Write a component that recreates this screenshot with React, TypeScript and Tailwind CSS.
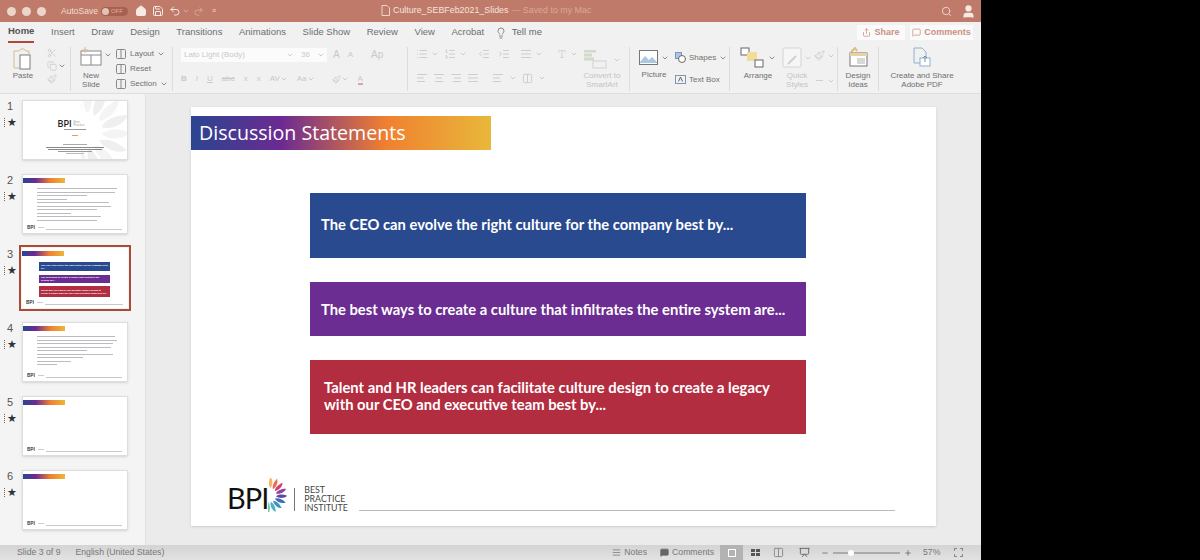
import type { ReactNode } from 'react'
import {
  AlignCenter, AlignJustify, AlignLeft, AlignRight, ChevronDown, Columns2, Copy, House, IndentDecrease, IndentIncrease,
  Lightbulb, List, ListOrdered, MessageSquare, Minus, Paintbrush, Plus, Presentation, Redo2, Save, Scissors, Search,
  Share, Type, Undo2, User,
} from 'lucide-react'

const tabs = ['Home', 'Insert', 'Draw', 'Design', 'Transitions', 'Animations', 'Slide Show', 'Review', 'View', 'Acrobat']

const petals = ['#f6e08e', '#f3b76c', '#e86f55', '#cf3f73', '#93429f', '#5a4aa8', '#3d6db5', '#3f94bf', '#4fb3b8', '#7cc9b2']
const greys = ['#efefef', '#f4f4f4', '#efefef', '#f4f4f4', '#efefef', '#f4f4f4', '#efefef', '#f4f4f4', '#efefef', '#f4f4f4']

function Chev({ faded }: { faded?: boolean }) {
  return <ChevronDown size={8} strokeWidth={2.5} className={faded ? 'text-[#c4c4c4]' : 'text-[#777]'} />
}

// blades of the BPI logo, turned around a point left of the drawing
function Fan({ w, h, colors }: { w: number; h: number; colors: string[] }) {
  return (
    <svg width={w} height={h} viewBox="0 0 20 34">
      {colors.map((c, i) => (
        <path
          key={i}
          d="M8 17 C10 14.5 14 13.5 19 14.5 C17 17.5 12 19 8 17 Z"
          fill={c}
          transform={`rotate(${-100 + i * 22} 1 17)`}
        />
      ))}
    </svg>
  )
}

function MiniLogo() {
  return (
    <div className="flex items-end">
      <span className="font-['Lato',sans-serif] text-[5px] leading-[5px] font-bold text-[#333]">BPI</span>
      <span className="ml-[3px] h-[1px] w-[6px] self-center bg-[#ccc]" />
    </div>
  )
}

function TextBars({ rows }: { rows: number[] }) {
  return (
    <div className="flex flex-col gap-[2.5px] pl-[14px] pt-[5px]">
      {rows.map((w, i) => (
        <div key={i} className="h-[1px] bg-[#bcbcc0]" style={{ width: w }} />
      ))}
    </div>
  )
}

function Thumb({ n, title, active, children }: { n: number; title?: boolean; active?: boolean; children?: ReactNode }) {
  return (
    <div className="flex h-[60px] items-start">
      <div className="flex w-[22px] flex-col items-center pr-[2px] text-[#555]">
        <span className="text-[11px] leading-[12px]">{n}</span>
        <div className="mt-[5px] flex items-center gap-[1px]">
          <span className="h-[9px] w-[2px] border-l border-dotted border-[#666]" />
          <span className="text-[11px] leading-[10px] text-[#333]">★</span>
        </div>
      </div>
      <div
        className={`relative flex h-[60px] w-[106px] flex-col bg-white ${
          active ? 'outline-2 outline-offset-1 outline-[#ad4a35]' : 'border border-[#ddd] shadow-sm'
        }`}
      >
        {title && (
          <div className="mt-[3px] h-[5px] w-[42px] bg-[linear-gradient(90deg,#2b4590_0%,#6b2a92_30%,#f08030_65%,#e8b83a_100%)]" />
        )}
        {children}
        {title && (
          <div className="absolute right-[5px] bottom-[3px] left-[4px] flex items-end gap-[2px]">
            <MiniLogo />
            <div className="h-[1px] flex-1 bg-[#c9c9c9]" />
          </div>
        )}
      </div>
    </div>
  )
}

function RibbonGroup({ w, children, divider = true }: { w: number; children: ReactNode; divider?: boolean }) {
  return (
    <div
      className={`relative flex h-[44px] shrink-0 items-start ${divider ? 'border-r border-[#dcdcdc]' : ''}`}
      style={{ width: w }}
    >
      {children}
    </div>
  )
}

function SideItem({ icon, label, chev }: { icon: ReactNode; label: string; chev?: boolean }) {
  return (
    <div className="flex h-[15px] items-center gap-[3px] text-[8px] text-[#707070]">
      {icon}
      <span>{label}</span>
      {chev && <Chev />}
    </div>
  )
}

function BigLabel({ children, faded }: { children: ReactNode; faded?: boolean }) {
  return (
    <div className={`text-center text-[8px] leading-[8.5px] ${faded ? 'text-[#c4c4c4]' : 'text-[#707070]'}`}>{children}</div>
  )
}

function Ribbon() {
  const faded = 'text-[#cdcdcd]'
  return (
    <div className="flex h-[50px] items-start bg-[#f1f1f1] pt-[4px] pl-[8px] font-['Liberation_Sans',sans-serif]">
      <RibbonGroup w={63}>
        <div className="flex w-[30px] flex-col items-center">
          <svg width="22" height="25" viewBox="0 0 22 25" fill="none">
            <path d="M2 4h5l2-2h3l2 2h3v3" stroke="#d8b98f" />
            <path d="M2 4v17h5" stroke="#d8b98f" />
            <rect x="8" y="8" width="10" height="14" fill="#fff" stroke="#7d7d7d" />
          </svg>
          <BigLabel>Paste</BigLabel>
        </div>
        <div className={`ml-[9px] flex flex-col gap-[3px] pt-[1px] ${faded}`}>
          <Scissors size={10} />
          <div className="flex items-center gap-[1px]">
            <Copy size={10} />
            <Chev />
          </div>
          <Paintbrush size={10} />
        </div>
      </RibbonGroup>
      <RibbonGroup w={102}>
        <div className="ml-[8px] flex w-[24px] flex-col items-center">
          <svg width="23" height="19" viewBox="0 0 23 19" fill="none">
            <rect x="1" y="4" width="20" height="14" fill="#fff" stroke="#8a8a8a" />
            <path d="M1 8h20M11 8v10" stroke="#8a8a8a" />
            <path d="M5 0v6M2 3h6" stroke="#d8b98f" />
          </svg>
          <div className="mt-[6px]">
            <BigLabel>
              New
              <br />
              Slide
            </BigLabel>
          </div>
        </div>
        <div className="mt-[4px] ml-[1px]">
          <Chev />
        </div>
        <div className="-mt-[1px] ml-[3px] flex flex-col">
          <SideItem icon={<Columns2 size={12} className="text-[#888]" />} label="Layout" chev />
          <SideItem icon={<Columns2 size={12} className="text-[#888]" />} label="Reset" />
          <SideItem icon={<Columns2 size={12} className="text-[#888]" />} label="Section" chev />
        </div>
      </RibbonGroup>
      <RibbonGroup w={235}>
        <div className="flex flex-col gap-[11px] pl-[8px] text-[#c9c9c9]">
          <div className="flex items-center">
            <div className="flex h-[14px] w-[116px] items-center justify-between bg-[#fbfbfb] px-[3px] text-[8px]">
              <span>Lato Light (Body)</span>
              <Chev faded />
            </div>
            <div className="flex h-[14px] w-[30px] items-center justify-between bg-[#fbfbfb] pr-[2px] pl-[4px] text-[8px]">
              <span>36</span>
              <Chev faded />
            </div>
            <span className="ml-[6px] text-[10px]">A</span>
            <span className="ml-[8px] text-[8px]">A</span>
            <span className="ml-[18px] text-[10px]">Ap</span>
          </div>
          <div className="flex items-center gap-[9px] text-[8px]">
            <span className="font-bold">B</span>
            <span className="italic">I</span>
            <span className="underline">U</span>
            <span className="line-through">abc</span>
            <span>x</span>
            <span>x</span>
            <span className="flex items-center">
              AV
              <Chev faded />
            </span>
            <span className="flex items-center">
              Aa
              <Chev faded />
            </span>
            <span className="ml-[8px] flex items-center">
              <Paintbrush size={9} />
              <Chev faded />
            </span>
            <span className="flex items-center border-b-2 border-[#dca5a5] leading-[9px]">A</span>
          </div>
        </div>
      </RibbonGroup>
      <RibbonGroup w={222}>
        <div className={`flex flex-col gap-[12px] pt-[1px] pl-[8px] ${faded}`}>
          <div className="flex items-center gap-[3px]">
            <List size={12} />
            <Chev faded />
            <ListOrdered size={12} className="ml-[2px]" />
            <Chev faded />
            <IndentDecrease size={12} className="ml-[8px]" />
            <IndentIncrease size={12} className="ml-[5px]" />
            <AlignJustify size={12} className="ml-[7px]" />
            <Chev faded />
            <Type size={10} className="ml-[11px]" />
            <Chev faded />
          </div>
          <div className="flex items-center gap-[5px]">
            <AlignLeft size={12} />
            <AlignCenter size={12} />
            <AlignRight size={12} />
            <AlignJustify size={12} />
            <AlignLeft size={12} className="ml-[8px]" />
            <Chev faded />
            <Columns2 size={11} />
            <Chev faded />
          </div>
        </div>
        <div className="absolute top-[3px] left-[169px] flex w-[50px] flex-col items-center">
          <div className="flex items-center gap-[2px]">
            <svg width="28" height="19" viewBox="0 0 28 19" fill="none">
              <path d="M1 1h12M1 5h8M1 9h10" stroke="#cfdccb" strokeWidth="3" />
              <rect x="10" y="11" width="13" height="7" stroke="#d0d0d0" />
            </svg>
            <Chev faded />
          </div>
          <div className="mt-[3px]">
            <BigLabel faded>
              Convert to
              <br />
              SmartArt
            </BigLabel>
          </div>
        </div>
      </RibbonGroup>
      <RibbonGroup w={100}>
        <div className="ml-[9px] flex flex-col items-center">
          <div className="flex items-center gap-[3px] pt-[3px]">
            <svg width="19" height="15" viewBox="0 0 19 15" fill="none">
              <rect x="0.5" y="0.5" width="18" height="14" fill="#fff" stroke="#777" />
              <path d="M1 12l5-6 4 4 3-3 5 5v1H1z" fill="#a9c8e4" />
            </svg>
            <Chev />
          </div>
          <div className="mt-[6px]">
            <BigLabel>Picture</BigLabel>
          </div>
        </div>
        <div className="ml-[6px] flex flex-col gap-[7px] pt-[3px]">
          <SideItem
            icon={
              <svg width="11" height="11" viewBox="0 0 11 11" fill="none">
                <rect x="0.5" y="0.5" width="6" height="6" fill="#a9c8e4" stroke="#7a98b5" />
                <circle cx="7" cy="7" r="3.5" fill="#fff" stroke="#666" />
              </svg>
            }
            label="Shapes"
            chev
          />
          <SideItem
            icon={
              <svg width="11" height="11" viewBox="0 0 11 11" fill="none">
                <rect x="0.5" y="1.5" width="10" height="8" stroke="#7a98b5" />
                <path d="M3.5 7.5L5.5 3l2 4.5" stroke="#666" />
              </svg>
            }
            label="Text Box"
          />
        </div>
      </RibbonGroup>
      <RibbonGroup w={108}>
        <div className="ml-[10px] flex flex-col items-center">
          <div className="flex items-end gap-[2px]">
            <svg width="26" height="21" viewBox="0 0 26 21" fill="none">
              <rect x="1" y="1" width="8" height="7" fill="#fff" stroke="#666" />
              <rect x="7" y="5" width="10" height="9" fill="#f1dc9a" />
              <rect x="15" y="13" width="8" height="7" fill="#fff" stroke="#666" />
            </svg>
            <div className="pb-[6px]">
              <Chev />
            </div>
          </div>
          <div className="mt-[4px]">
            <BigLabel>Arrange</BigLabel>
          </div>
        </div>
        <div className="ml-[6px] flex flex-col items-center">
          <div className="flex items-center gap-[2px]">
            <svg width="20" height="21" viewBox="0 0 20 21" fill="none">
              <rect x="1" y="1" width="18" height="19" rx="1" fill="#f6f6f6" stroke="#d4d4d4" />
              <path d="M6 17l8-8" stroke="#cfcfcf" strokeWidth="2" />
            </svg>
            <Chev faded />
          </div>
          <div className="mt-[4px]">
            <BigLabel faded>
              Quick
              <br />
              Styles
            </BigLabel>
          </div>
        </div>
        <div className={`ml-[2px] flex flex-col gap-[14px] pt-[3px] ${faded}`}>
          <div className="flex items-center gap-[2px]">
            <Paintbrush size={11} />
            <Chev faded />
          </div>
          <div className="flex items-center gap-[2px]">
            <Minus size={11} />
            <Chev faded />
          </div>
        </div>
      </RibbonGroup>
      <RibbonGroup w={41}>
        <div className="flex w-full flex-col items-center">
          <svg width="21" height="20" viewBox="0 0 21 20" fill="none">
            <path d="M3 5l4-4 2 3" stroke="#d9bf86" strokeWidth="2" />
            <rect x="2" y="6" width="17" height="13" fill="#fff" stroke="#777" />
            <rect x="2" y="6" width="17" height="3" fill="#e7d39b" />
            <rect x="9" y="11" width="8" height="6" fill="#d8d8d8" />
          </svg>
          <div className="mt-[5px]">
            <BigLabel>
              Design
              <br />
              Ideas
            </BigLabel>
          </div>
        </div>
      </RibbonGroup>
      <RibbonGroup w={80} divider={false}>
        <div className="flex w-full flex-col items-center pl-[6px]">
          <svg width="18" height="20" viewBox="0 0 18 20" fill="none">
            <path d="M1 1h8l4 4v5M1 1v15h6" stroke="#8fb0d0" />
            <rect x="7" y="11" width="10" height="8" fill="#fff" stroke="#8fb0d0" />
            <path d="M12 9v6M10 11l2-2 2 2" stroke="#7b93aa" />
          </svg>
          <div className="mt-[5px] whitespace-nowrap">
            <BigLabel>
              Create and Share
              <br />
              Adobe PDF
            </BigLabel>
          </div>
        </div>
      </RibbonGroup>
    </div>
  )
}

function SlideOne() {
  return (
    <div className="relative flex h-full flex-col items-center overflow-hidden pt-[18px]">
      <div className="absolute -top-[14px] -right-[6px]">
        <Fan w={52} h={88} colors={greys} />
      </div>
      <div className="relative flex items-center gap-[2px] pr-[8px]">
        <span className="font-['Lato',sans-serif] text-[9px] leading-[9px] font-semibold text-[#222]">BPI</span>
        <span className="text-[3px] leading-[3px] text-[#999]">
          Best
          <br />
          Practice
        </span>
      </div>
      <div className="relative mt-[1px] h-[1px] w-[22px] bg-[#999]" />
      <div className="relative mt-[5px] h-[1px] w-[6px] bg-[#d9a64a]" />
      <div className="relative mt-[8px] h-[1px] w-[24px] bg-[#aaa]" />
      <div className="relative mt-[2px] h-[1px] w-[58px] bg-[#888]" />
      <div className="relative mt-[1px] h-[1px] w-[54px] bg-[#888]" />
      <div className="relative mt-[1px] h-[1px] w-[34px] bg-[#999]" />
      <div className="relative mt-[1px] h-[1px] w-[18px] bg-[#bbb]" />
    </div>
  )
}

function SlideThree() {
  const cls = 'ml-[17px] flex w-[71px] items-center px-[2px] text-[2.4px] leading-[3px] font-bold text-white'
  return (
    <div className="flex flex-col">
      <div className={`mt-[6px] h-[9px] bg-[#2a4a8f] ${cls}`}>The CEO can evolve the right culture for the company best by...</div>
      <div className={`mt-[4px] h-[8px] bg-[#6b2d91] ${cls}`}>The best ways to create a culture that infiltrates the system are...</div>
      <div className={`mt-[3px] h-[11px] bg-[#b32d40] ${cls}`}>Talent and HR leaders can facilitate culture design to create a legacy with our CEO and executive team best by...</div>
    </div>
  )
}

export default function App() {
  return (
    <div className="flex h-[560px] w-[1200px] overflow-hidden bg-black font-['Liberation_Sans',sans-serif]">
      <div className="flex h-full w-[981px] shrink-0 flex-col bg-[#ebebeb]">
        {/* title bar */}
        <div className="relative flex h-[22px] shrink-0 items-center bg-[#bf7a69] text-[#f2dcd5]">
          <div className="ml-[7px] flex w-[43px] gap-[6px]">
            <span className="size-[9px] rounded-full bg-[#ecd5cb]" />
            <span className="size-[9px] rounded-full bg-[#ecd5cb]" />
            <span className="size-[9px] rounded-full bg-[#ecd5cb]" />
          </div>
          <span className="ml-[11px] text-[8.5px]">AutoSave</span>
          <div className="ml-[3px] flex h-[9px] w-[27px] items-center rounded-full bg-[#a9604f] pl-[1px]">
            <span className="size-[7px] rounded-full bg-[#e3c2b7]" />
            <span className="ml-[2px] text-[6px] text-[#dcb5a8]">OFF</span>
          </div>
          <House size={12} className="ml-[7px] fill-[#f7e9e4] text-[#f7e9e4]" />
          <Save size={12} className="ml-[5px] text-[#f7e9e4]" />
          <Undo2 size={12} className="ml-[5px] text-[#f7e9e4]" />
          <ChevronDown size={8} className="ml-[1px] text-[#e5c3b8]" />
          <Redo2 size={11} className="ml-[3px] text-[#d9a999]" />
          <span className="ml-[8px] text-[7px]">≡</span>
          <div className="absolute left-[381px] flex items-center gap-[3px] text-[8.9px]">
            <svg width="9" height="11" viewBox="0 0 9 11" fill="none">
              <path d="M1 .5h5l2.5 2.5v7.5H1z" stroke="#ecd5cb" />
            </svg>
            <span className="text-[#f5e4de]">Culture_SEBFeb2021_Slides</span>
            <span className="text-[#d9a999]">— Saved to my Mac</span>
          </div>
          <Search size={11} className="absolute left-[941px] text-[#f2dcd5]" />
          <User size={15} className="absolute left-[961px] fill-[#f7e9e4] text-[#f7e9e4]" />
        </div>

        {/* tabs */}
        <div className="flex h-[21px] shrink-0 items-center justify-between bg-[#f1f1f1] pr-[8px] pl-[8px]">
          <div className="flex h-full items-center gap-[16.6px] text-[9.5px] text-[#6f6f6f]">
            {tabs.map(tab => (
              <span
                key={tab}
                className={`flex h-full items-center ${tab === 'Home' ? 'border-b-2 border-[#b04a35] font-bold text-[#555]' : ''}`}
              >
                {tab}
              </span>
            ))}
            <span className="-ml-[6px] flex items-center gap-[5px] text-[#666]">
              <Lightbulb size={12} className="text-[#888]" />
              Tell me
            </span>
          </div>
          <div className="flex items-center gap-[5px] text-[9px] font-bold text-[#c99184]">
            <span className="flex h-[15px] w-[48px] items-center justify-center gap-[3px] bg-[#fafafa]">
              <Share size={9} />
              Share
            </span>
            <span className="flex h-[15px] w-[63px] items-center justify-center gap-[3px] bg-[#fafafa]">
              <MessageSquare size={9} />
              Comments
            </span>
          </div>
        </div>

        <Ribbon />

        {/* work area */}
        <div className="flex min-h-0 flex-1 border-t border-[#dedede]">
          <div className="flex w-[146px] shrink-0 flex-col gap-[14px] border-r border-[#e2e2e2] bg-[#f4f4f4] pt-[6px]">
            <Thumb n={1}>
              <SlideOne />
            </Thumb>
            <Thumb n={2} title>
              <TextBars rows={[80, 78, 50, 30, 72, 74, 60, 34, 64, 60]} />
            </Thumb>
            <Thumb n={3} title active>
              <SlideThree />
            </Thumb>
            <Thumb n={4} title>
              <TextBars rows={[78, 80, 76, 74, 50, 76, 46, 34, 20]} />
            </Thumb>
            <Thumb n={5} title />
            <Thumb n={6} title />
          </div>

          <div className="min-w-0 flex-1 pt-[13px] pl-[45px]">
            <div className="flex h-[419px] w-[745px] flex-col bg-white font-['Lato',sans-serif] shadow-sm">
              <div className="mt-[9px] flex h-[34px] w-[300px] shrink-0 items-center bg-[linear-gradient(90deg,#2b4590_0%,#6b2a92_30%,#f08030_65%,#e8b83a_100%)] pl-[8px] font-['Open_Sans',sans-serif] text-[19.6px] text-white">
                Discussion Statements
              </div>
              <div className="mt-[43px] ml-[119px] flex h-[65px] w-[496px] items-center bg-[#2a4a8f] pb-[2px] pl-[11px] text-[14.75px] font-bold text-white">
                The CEO can evolve the right culture for the company best by...
              </div>
              <div className="mt-[24px] ml-[119px] flex h-[54px] w-[496px] items-center bg-[#6b2d91] pl-[11px] text-[14.75px] font-bold text-white">
                The best ways to create a culture that infiltrates the entire system are...
              </div>
              <div className="mt-[24px] ml-[119px] flex h-[74px] w-[496px] items-center bg-[#b32d40] pb-[2px] pl-[14px] text-[14.8px] leading-[17px] font-bold text-white">
                Talent and HR leaders can facilitate culture design to create a legacy
                <br />
                with our CEO and executive team best by...
              </div>
              <div className="mt-[44px] flex items-end pl-[36px]">
                <span className="text-[29px] leading-[29px] tracking-[-1px] text-[#111]">BPI</span>
                <Fan w={20} h={34} colors={petals} />
                <div className="mb-[1px] ml-[6px] h-[23px] w-[1px] bg-[#777]" />
                <div className="ml-[9px] text-[8.8px] leading-[9px] text-[#444]">
                  BEST
                  <br />
                  PRACTICE
                  <br />
                  INSTITUTE
                </div>
                <div className="mb-[1px] ml-[11px] h-[1px] w-[536px] bg-[#bbb]" />
              </div>
            </div>
          </div>
        </div>

        {/* status bar */}
        <div className="flex h-[15px] shrink-0 items-center bg-gradient-to-b from-[#d4d4d4] to-[#e2e2e2] text-[8.7px] text-[#777]">
          <span className="ml-[17px]">Slide 3 of 9</span>
          <span className="ml-[15px]">English (United States)</span>
          <span className="ml-[448px] flex items-center gap-[3px]">
            <AlignJustify size={9} />
            Notes
          </span>
          <span className="ml-[13px] flex items-center gap-[3px]">
            <MessageSquare size={9} className="fill-[#666] text-[#666]" />
            Comments
          </span>
          <span className="ml-[6px] flex h-full w-[23px] items-center justify-center bg-[#b3b3b3]">
            <span className="size-[8px] border border-white" />
          </span>
          <div className="ml-[8px] grid grid-cols-2 gap-[1px]">
            <span className="h-[3px] w-[4px] bg-[#555]" />
            <span className="h-[3px] w-[4px] bg-[#555]" />
            <span className="h-[3px] w-[4px] bg-[#555]" />
            <span className="h-[3px] w-[4px] bg-[#555]" />
          </div>
          <Columns2 size={11} className="ml-[13px] text-[#888]" />
          <Presentation size={11} className="ml-[15px] text-[#666]" />
          <Minus size={8} className="ml-[11px] text-[#555]" />
          <div className="relative ml-[4px] h-[2px] w-[67px] bg-[#aaa]">
            <span className="absolute -top-[2px] left-[15px] size-[6px] rounded-full bg-white" />
          </div>
          <Plus size={8} className="ml-[4px] text-[#555]" />
          <span className="ml-[11px]">57%</span>
          <span className="ml-[14px] size-[9px] border border-dashed border-[#888]" />
        </div>
      </div>
    </div>
  )
}
